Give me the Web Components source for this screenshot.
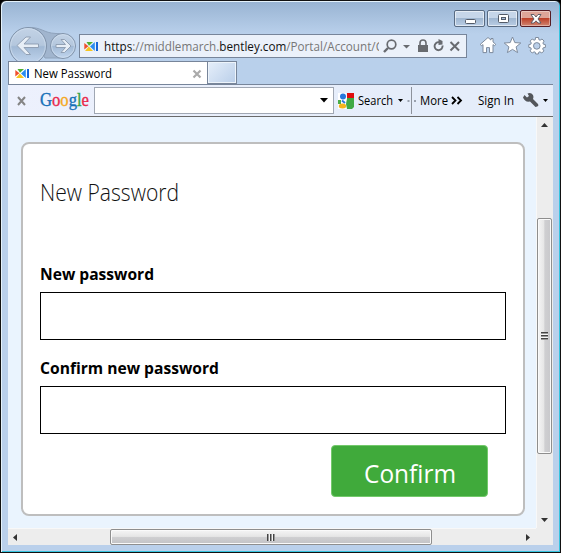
<!DOCTYPE html>
<html lang="en">
<head>
<meta charset="utf-8">
<title>New Password</title>
<style>
html,body{margin:0;width:561px;height:553px;overflow:hidden;background:#000;font-family:"Open Sans","Noto Sans",sans-serif}
</style>
</head>
<body>
<browser-window></browser-window>
<script>
const define=(name,html,setup)=>customElements.define(name,class extends HTMLElement{
  constructor(){super();this.attachShadow({mode:'open'}).innerHTML=html;}
  connectedCallback(){if(setup)setup(this,this.shadowRoot);}
});

/* Text condensed or widened so that it fills a given width */
define('fit-text',`<style>:host{display:block;white-space:nowrap;flex:none}span{display:inline-block;white-space:pre;transform-origin:0 50%}</style><span><slot></slot></span>`,(el,root)=>{
  const s=root.querySelector('span'),w=+el.getAttribute('width');
  el.style.width=w+'px';
  s.style.transform='scaleX('+w/s.getBoundingClientRect().width+')';
});

define('site-icon',`<style>:host{display:block;width:15px;height:11px;flex:none}svg{display:block}</style>
<svg width="15" height="11" viewBox="0 0 15 11"><path d="M2.500 1h6.500L5 4.800z" fill="#4fae32"/><path d="M.3 2 4.400 5.200.3 8.500z" fill="#f0502c"/><path d="m4.800 5.500 4.200 4.500H1z" fill="#f7c51e"/><path d="M10.800 1v9L6 5.500z" fill="#2a8cf0"/><path d="M12 1h2v9h-2z" fill="#1565d8"/></svg>`);

define('caption-buttons',`<style>:host{display:flex;gap:2px}
i{box-sizing:border-box;width:31px;height:17px;border:1px solid #596b82;border-radius:2px;box-shadow:inset 0 0 0 1px #ffffff90;background:linear-gradient(#c6d6e9 0 47%,#a0b7d1 50%,#b9cde5);display:flex;align-items:center;justify-content:center}
i.c{border-color:#561c23;background:linear-gradient(#dea598 0 44%,#bd4129 50%,#d18672);box-shadow:inset 0 0 0 1px #ffffff60}svg{display:block}</style>
<i><svg width="12" height="12"><rect x="1.500" y="6.500" width="10" height="4" rx="1" fill="#fff" stroke="#535b68"/></svg></i>
<i><svg width="12" height="12"><rect x="1.500" y="1.500" width="10" height="8" rx="1" fill="#fff" stroke="#535b68"/><rect x="4.500" y="4.500" width="4" height="2" fill="#a8bdd8" stroke="#535b68"/></svg></i>
<i class="c"><svg width="12" height="12" viewBox="0 0 12 12"><path d="M1 1.500h3l2 2.500 2-2.500h3L8 6l3 4H8L6 7.800 4 10H1l3-4z" fill="#fff" stroke="#535560" stroke-width=".9"/></svg></i>`);

define('nav-buttons',`<style>:host{display:block;width:71px;height:35px;overflow:hidden;flex:none}svg{display:block}</style>
<svg width="71" height="35" viewBox="8 26 71 35"><defs><linearGradient id="g" x2="0" y2="1"><stop stop-color="#c3d3e6"/><stop offset=".48" stop-color="#b4c7dd"/><stop offset=".52" stop-color="#a1b9d5"/><stop offset="1" stop-color="#c3d7ef"/></linearGradient></defs>
<path d="M28 27.500C42 27 43 33 56 33.500L63 34v24H45z" fill="#a1b5ce" stroke="#8ea2bb"/>
<circle cx="28" cy="46" r="18.500" fill="url(#g)" stroke="#8193aa"/><circle cx="28" cy="46" r="17.300" fill="none" stroke="#d1dfef" stroke-opacity=".7"/>
<circle cx="63" cy="46" r="12.500" fill="url(#g)" stroke="#8193aa"/><circle cx="63" cy="46" r="11.400" fill="none" stroke="#d1dfef" stroke-opacity=".7"/>
<path d="m17 45.500 9-8.500h4.500l-6.500 7h14.500v3.500H24l6.500 7H26z" fill="#e7eef6" stroke="#8b9aae" stroke-width=".9"/>
<path d="m71 46-6.500-6.500H61l4.500 5H56v3h9.500l-4.500 5h3.500z" fill="#e7eef6" stroke="#8b9aae" stroke-width=".9"/></svg>`);

define('address-bar',`<style>:host{box-sizing:border-box;width:388px;height:24px;margin-top:8px;border:1px solid #77859a;background:#ebf1fa;display:flex;align-items:center;font-size:13px;color:#777;flex:none;line-height:22px}
site-icon{margin:0 5px 0 4px}b{font-weight:400;color:#111}svg{display:block;margin-left:2px}.clip{width:275px;overflow:hidden}</style>
<site-icon></site-icon><div class="clip"><fit-text width="279"><b>https</b>://middlemarch.<b>bentley.com</b>/Portal/Account/C</fit-text></div>
<svg width="82" height="22" viewBox="381 35 82 22" fill="none" stroke="#686b70"><circle cx="391.500" cy="44.500" r="4.300" stroke-width="1.700"/><path d="m388 48-4 4" stroke-width="2.400"/><path d="M403 45h7l-3.500 3.500z" fill="#686b70" stroke="none"/><path d="M418 45h10v7h-10z" fill="#686b70" stroke="none"/><path d="M420 46v-3a3 3 0 0 1 6 0v3" stroke-width="1.600"/><path d="M442.500 45.500a4 4 0 1 1-3.500-3.300" stroke-width="1.900"/><path d="M438.500 39v6l4-.5V41z" fill="#686b70" stroke="none"/><path d="m450.500 42 8.500 8.500m0-8.500-8.500 8.500" stroke-width="2"/></svg>`);

define('command-icons',`<style>:host{display:block;margin:7px 0 0 13px}svg{display:block}</style>
<svg width="70" height="24" viewBox="480 33 70 24" fill="#fff" stroke="#7e8b9d" stroke-linejoin="round">
<path d="m488 37.500 3 2.600v-1.600h2v3.400l2.700 2.400-1.200 1.500-1.500-1.200v8h-3.500v-5h-3v5H483v-8l-1.500 1.200-1.200-1.500z"/>
<path d="m512.500 37 2.300 5.600 6 .4-4.700 3.900 1.500 5.700-5.100-3.200-5.100 3.200 1.500-5.700-4.700-3.900 6-.4z"/>
<g transform="translate(537 45)"><path d="m-1.500-7.500h3l.4 2.200 1.200.5 1.900-1.200 2.100 2.100-1.200 1.900.5 1.200 2 .4v2.800l-2.200.4-.5 1.200 1.200 1.900-2.100 2.100-1.900-1.200-1.200.5-.4 1.700h-2.600l-.4-1.700-1.200-.5L-4.800 8-6.900 5.900-5.700 4l-.5-1.200-2-.4V-.400l2-.4.5-1.200L-6.900-3.900-4.800-6l1.900 1.200 1.200-.5z"/><circle r="3.300" cy=".9" cx="-.2" fill="#bbd0ea"/></g></svg>`);

define('tab-strip',`<style>:host{display:flex;height:24px;font-size:12px;color:#000}
.tab{box-sizing:border-box;width:200px;height:23px;border:1px solid #77859a;border-bottom:0;background:#fff;display:flex;align-items:center;padding:1px 5px 0 6px}
fit-text{margin-left:4px;line-height:20px}svg{margin-left:auto;display:block}
.new{box-sizing:border-box;width:29px;height:23px;border:1px solid #77859a;border-left:0;background:linear-gradient(135deg,#e6effa,#b9cee9);box-shadow:inset 0 0 0 1px #edf4fb}</style>
<div class="tab"><site-icon></site-icon><fit-text width="78">New Password</fit-text><svg width="10" height="10" fill="none" stroke="#aaa" stroke-width="2.200"><path d="m1.500 1.500 7 7m0-7-7 7"/></svg></div><div class="new"></div>`);

define('google-bar',`<style>:host{box-sizing:border-box;display:flex;align-items:center;height:33px;margin-top:-1px;border-top:1px solid #77859a;border-bottom:1px solid #6a6a6a;background:linear-gradient(90deg,#edf1fd,#e5edfa 70%);font-size:12px;color:#000;line-height:20px}
svg{display:block;flex:none}.x{margin-left:9px}.logo{font:18.500px/24px "Liberation Serif",serif;margin:-1px 0 0 14px;-webkit-text-stroke:.35px}
.field{box-sizing:border-box;width:240px;height:27px;border:1px solid #a0a7b3;background:#fff;margin-left:5px;display:flex;align-items:center;justify-content:flex-end;padding-right:5px}
.g{margin:0 4px 0 4px}.sep{width:1px;height:27px;background:#8d929b;margin-left:2px}</style>
<svg class="x" width="9" height="10" fill="none" stroke="#858585" stroke-width="2"><path d="m1 1 7 8m0-8L1 9"/></svg>
<fit-text class="logo" width="49"><span style="color:#1670b8">G</span><span style="color:#e8284b">o</span><span style="color:#f5a81c">o</span><span style="color:#1670b8">g</span><span style="color:#35a34a">l</span><span style="color:#e8284b">e</span></fit-text>
<div class="field"><svg width="8" height="5"><path d="M0 0h8L4 4.500z"/></svg></div>
<svg class="g" width="16" height="16"><path d="M9 0h7v6H9z" fill="#e00d0d"/><path d="M9 5h7v9l-2 2H8V8z" fill="#3faa44"/><path d="M0 0h8l1 5-1 6 1 5H0z" fill="#fff"/><path d="M0 7h3v4H0z" fill="#49ad48"/><circle cx="5" cy="3.500" r="3" fill="#2878dc"/><path d="M4 7.500 7 10" stroke="#2878dc" stroke-width="2"/><ellipse cx="4.500" cy="13" rx="3.700" ry="2.500" fill="#f4b51c"/></svg>
<fit-text width="35">Search</fit-text>
<svg width="16" height="6" style="margin-left:5px"><path d="M0 1h5L2.500 4z"/><path d="M9.500 2h2v2h-2z" fill="#9aa1ad"/></svg>
<div class="sep" style="margin-left:-3px"></div><svg width="4" height="4"><path d="M2 1h2v2H2z" fill="#9aa1ad"/></svg>
<fit-text width="28" style="margin-left:4px">More</fit-text>
<svg width="12" height="9" style="margin-left:3px" fill="none" stroke="#000" stroke-width="1.800"><path d="m1 1 3.500 3.500L1 8m5.500-7L10 4.500 6.500 8"/></svg>
<fit-text width="36" style="margin-left:15px">Sign In</fit-text>
<svg width="26" height="18" style="margin-left:8px"><path d="M1 5.500 2.500 3 5 5.500 7 4 5.500 1.500Q9 0 11 3q1 2 0 4l5 5q1 2-1 2.500-1.500 1-2.500-.5L8 9.500Q3 10.500 1 5.500z" fill="#53565b"/><path d="M21 7h5l-2.500 3z"/></svg>`);

define('scroll-bar',`<style>:host{display:grid;background:#ededed;box-sizing:border-box}
:host([dir=v]){grid-template-rows:101px 236px 1fr;width:17px;padding-right:1px;border-left:1px solid #f8f8f8}
:host([dir=h]){grid-template-columns:102px 322px 1fr;height:17px;border-top:1px solid #f8f8f8}
div{display:flex;justify-content:center;align-items:center;box-sizing:border-box}svg{display:block}
:host([dir=v]) .a{align-items:flex-start;padding-top:6px}:host([dir=v]) .z{align-items:flex-end;padding-bottom:6px}
:host([dir=h]) .a{justify-content:flex-start;padding-left:5px}:host([dir=h]) .z{justify-content:flex-end;padding-right:6px}
.t{border:1px solid #8e8e8e;border-radius:2px;box-shadow:inset 0 0 0 1px #fafafa;background:linear-gradient(90deg,#f5f5f5,#e6e6e6 46%,#cfcfd1 52%,#c8c8cb)}
:host([dir=h]) .t{height:16px;background:linear-gradient(#f5f5f5,#e6e6e6 46%,#cfcfd1 52%,#c2c2c5)}
.grip{width:7px;height:8px;background:repeating-linear-gradient(#444 0 1px,#999 1px 2px,#f5f5f5 2px 3px)}
:host([dir=h]) .grip{width:8px;height:7px;background:repeating-linear-gradient(90deg,#444 0 1px,#999 1px 2px,#f5f5f5 2px 3px)}</style>
<div class="a"><svg></svg></div><div class="t"><span class="grip"></span></div><div class="z"><svg></svg></div>`,(el,root)=>{
  const v=el.getAttribute('dir')==='v',[a,z]=root.querySelectorAll('svg');
  [a,z].forEach((s,i)=>{s.setAttribute('width',v?7:4);s.setAttribute('height',v?4:7);
  s.innerHTML=`<path fill="#333" d="${v?(i?'M0 0h7L3.500 4z':'M0 4h7L3.500 0z'):(i?'M0 0v7l4-3.500z':'M4 0v7L0 3.500z')}"/>`;});
});

define('password-field',`<style>:host{display:block;height:94px}.l{font-size:16.500px;font-weight:700;line-height:24px;height:30px;color:#000}
input{display:block;box-sizing:border-box;width:466px;height:48px;border:1px solid #000;border-radius:0;background:#fff;margin:0;padding:0 8px;outline:0}</style>
<div class="l"><slot></slot></div><input type="password">`);

define('password-card',`<style>:host{display:block;box-sizing:border-box;width:504px;height:374px;margin:25px 0 0 13px;border:2px solid #bebebe;border-radius:8px;background:#fff;padding:33px 17px 0}
.h{font-size:23px;font-weight:300;line-height:30px;height:85px;color:#111}
button{display:flex;justify-content:center;align-items:center;box-sizing:border-box;width:157px;height:52px;margin:-5px 0 0 291px;border:1px solid #73c96b;border-radius:4px;background:#40aa3b;color:#fff;font:400 25px/40px "Open Sans","Noto Sans",sans-serif;padding:3px 0 0}</style>
<fit-text class="h" width="139">New Password</fit-text>
<password-field><fit-text width="114">New password</fit-text></password-field>
<password-field><fit-text width="179">Confirm new password</fit-text></password-field>
<button><fit-text width="92">Confirm</fit-text></button>`);

define('browser-window',`<style>:host{display:block;box-sizing:border-box;width:561px;height:553px;border:1px solid #111;border-radius:6px 6px 0 0;background:linear-gradient(#98b3d2,#b9d0eb 33px,#bad0eb);padding:0 7px 8px;box-shadow:inset 1px 1px #e5f2fb,inset -1px -1px #36c4df;overflow:hidden}
header{height:25px;display:flex;justify-content:flex-end;padding:9px 2px 0 0;box-sizing:border-box}
.nav{display:flex;height:35px}.view{display:grid;grid-template-columns:528px 17px;grid-template-rows:411px 17px;width:545px;background:#ededed}.page{background:#eaf4fe;overflow:hidden}</style>
<header><caption-buttons></caption-buttons></header>
<div class="nav"><nav-buttons></nav-buttons><address-bar></address-bar><command-icons></command-icons></div>
<tab-strip></tab-strip><google-bar></google-bar>
<div class="view"><div class="page"><password-card></password-card></div><scroll-bar dir="v"></scroll-bar><scroll-bar dir="h"></scroll-bar></div>`);
</script>
</body>
</html>
